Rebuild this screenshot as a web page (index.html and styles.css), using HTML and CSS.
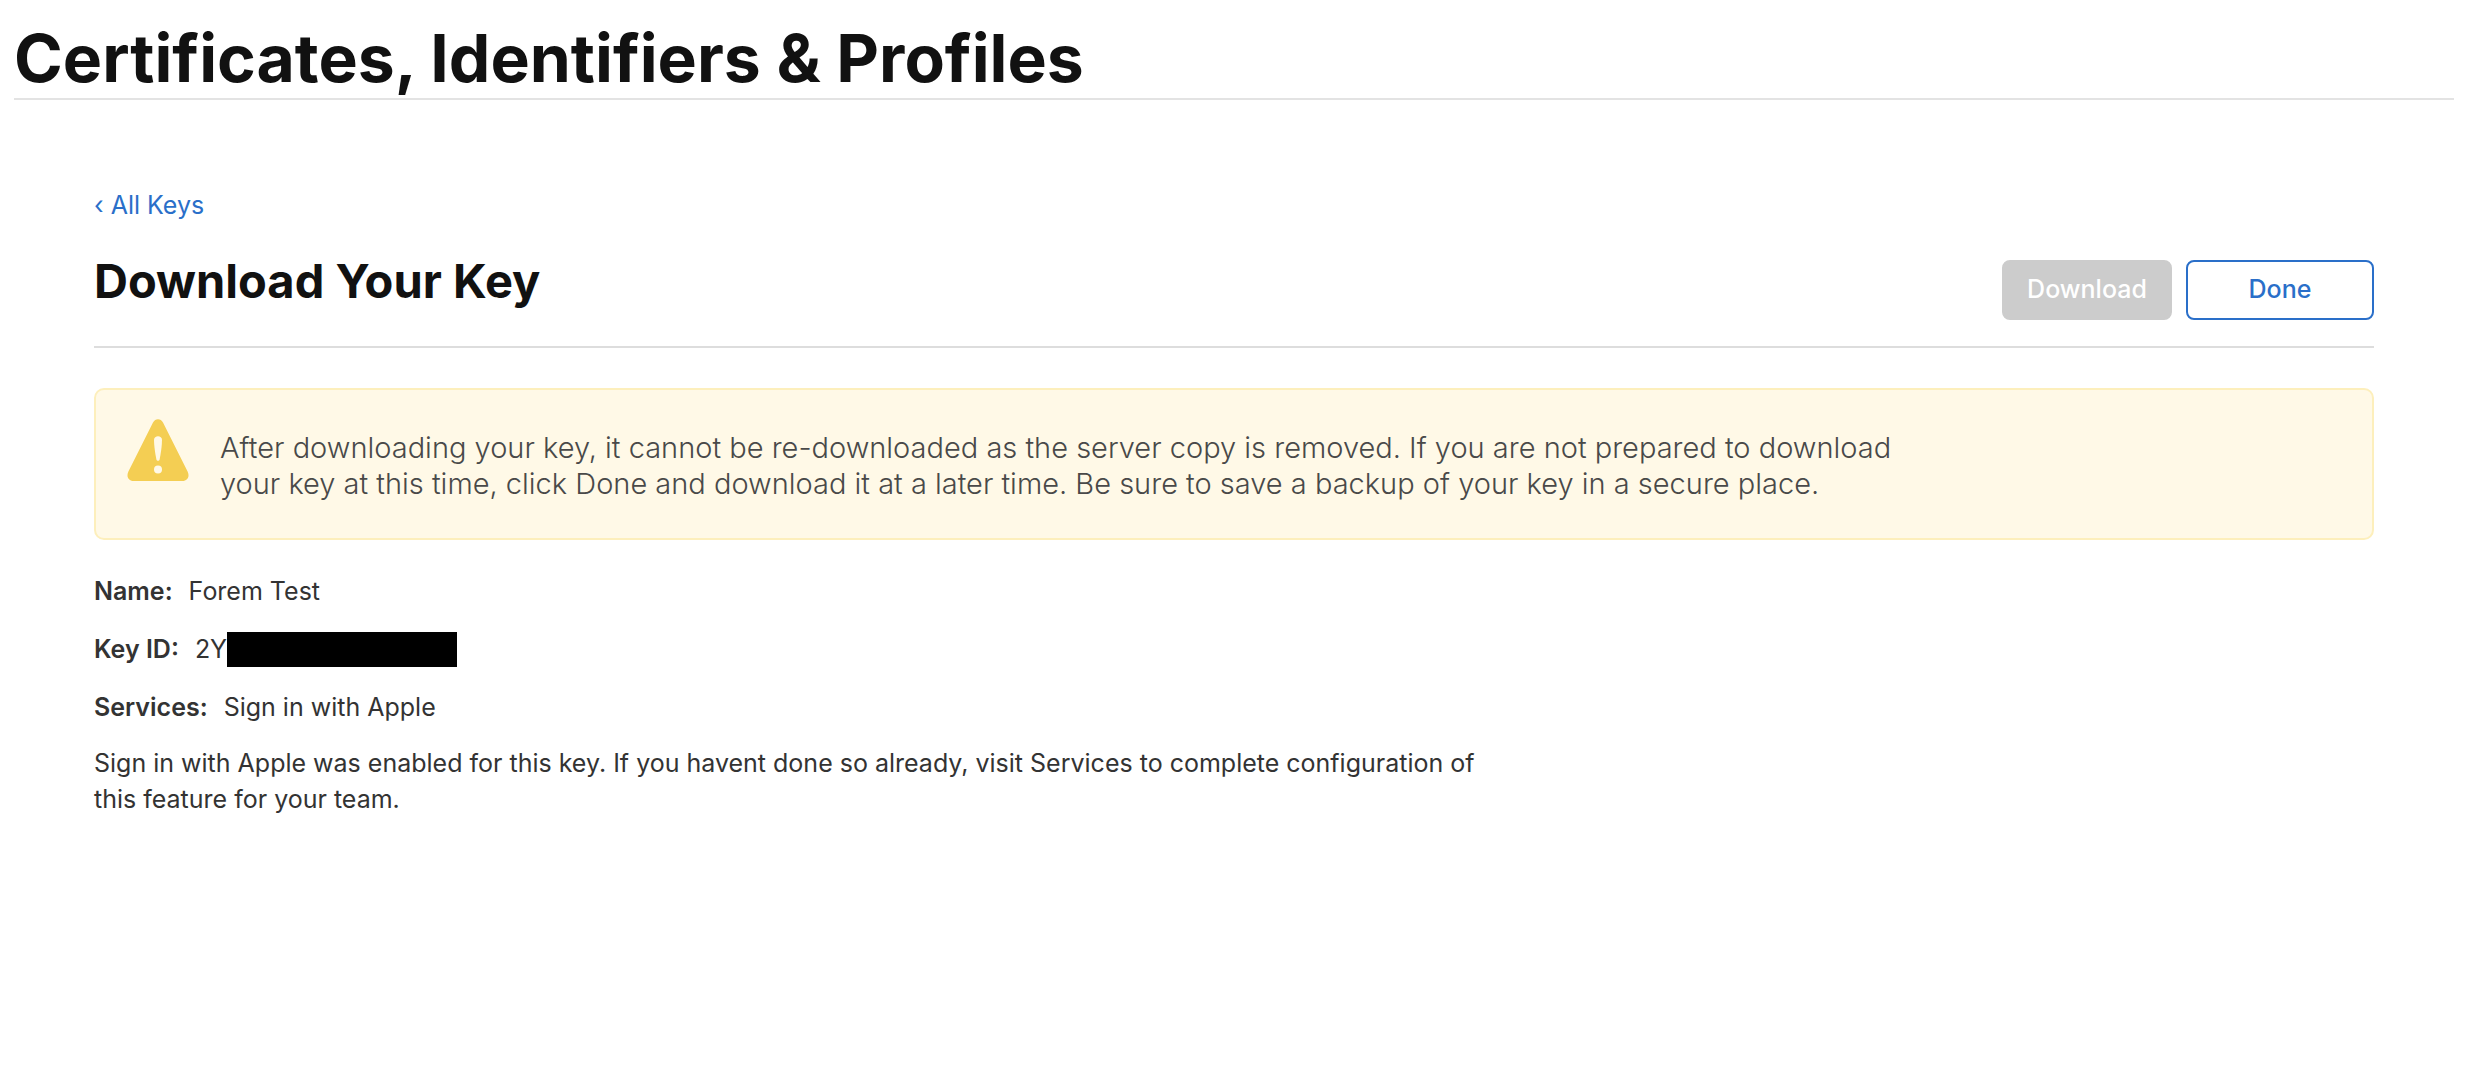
FILE: index.html
```html
<!DOCTYPE html>
<html lang="en">
<head>
<meta charset="utf-8">
<meta name="viewport" content="width=device-width, initial-scale=1">
<title>Certificates, Identifiers &amp; Profiles</title>
<link rel="stylesheet" href="styles.css">
</head>
<body>
<header class="page-header">
  <h1 class="page-title">Certificates, Identifiers &amp; Profiles</h1>
</header>
<main class="content">
  <a class="back-link" href="#keys">‹ All Keys</a>
  <div class="toolbar">
    <h2 class="section-title">Download Your Key</h2>
    <div class="actions">
      <button class="button button-primary" type="button" disabled>Download</button>
      <button class="button button-secondary" type="button">Done</button>
    </div>
  </div>
  <section class="alert">
    <svg class="alert-icon" viewBox="0 0 62 63" aria-hidden="true">
      <path fill="#f4ce53" d="M26 4.500C28 0 34 0 36 4.500L60.600 53.500C63 58.500 60.500 63 55.500 63H6.500C1.500 63-1 58.500 1.400 53.500Z"/>
      <path fill="#fff9e7" d="M27 22C27 17 35 17 35 22C35 28 33.700 36 32.600 41.500C32.200 43.300 29.800 43.300 29.400 41.500C28.300 36 27 28 27 22Z"/>
      <circle fill="#fff9e7" cx="31" cy="51.500" r="4"/>
    </svg>
    <p class="alert-text">After downloading your key, it cannot be re-downloaded as the server copy is removed. If you are not prepared to download your key at this time, click Done and download it at a later time. Be sure to save a backup of your key in a secure place.</p>
  </section>
  <dl class="details">
    <div class="detail"><dt>Name:</dt><dd>Forem Test</dd></div>
    <div class="detail"><dt>Key ID:</dt><dd>2Y<span class="redacted"></span></dd></div>
    <div class="detail"><dt>Services:</dt><dd>Sign in with Apple</dd></div>
  </dl>
  <p class="note">Sign in with Apple was enabled for this key. If you havent done so already, visit Services to complete configuration of this feature for your team.</p>
</main>
</body>
</html>
```
FILE: styles.css
```css
* {
  box-sizing: border-box;
}

body {
  margin: 0;
  background: #fff;
  color: #333;
  font-family: Inter, "Liberation Sans", sans-serif;
  font-size: 25px;
  line-height: 36px;
}

h1, h2, p, dl, dd {
  margin: 0;
}

.page-header {
  margin: 0 20px 0 14px;
  padding: 20px 0 2px;
  border-bottom: 2px solid #e3e3e3;
}

.page-title {
  color: #111;
  font-size: 66px;
  font-weight: 700;
  line-height: 76px;
}

.content {
  padding: 87px 100px 0 94px;
}

.back-link {
  display: inline-block;
  color: #2a6fc9;
  text-decoration: none;
}

.toolbar {
  display: flex;
  justify-content: space-between;
  align-items: flex-start;
  padding: 28px 0 26px;
  border-bottom: 2px solid #ddd;
}

.section-title {
  color: #111;
  font-size: 47px;
  font-weight: 700;
  line-height: 60px;
}

.actions {
  display: flex;
  gap: 14px;
  padding-top: 9px;
}

.button {
  height: 60px;
  padding: 0 22px 2px;
  border: 2px solid #2a6fc9;
  border-radius: 8px;
  background: #fff;
  color: #2a6fc9;
  font: inherit;
  font-weight: 500;
}

.button-primary {
  min-width: 170px;
  border-color: #ccc;
  background: #ccc;
  color: #fff;
}

.button-secondary {
  min-width: 188px;
}

.alert {
  display: flex;
  gap: 31px;
  margin-top: 40px;
  padding: 28px 31px 36px;
  border: 2px solid #fdefbc;
  border-radius: 10px;
  background: #fff9e7;
}

.alert-icon {
  flex: none;
  width: 62px;
  height: 63px;
}

.alert-text {
  max-width: 1680px;
  padding-top: 12px;
  color: #494949;
  font-size: 29px;
  font-weight: 300;
}

.details {
  display: grid;
  gap: 22px;
  margin-top: 33px;
}

.detail {
  display: flex;
  gap: 16px;
}

.detail dt {
  font-weight: 600;
}

.detail dd {
  display: flex;
  align-items: flex-end;
}

.redacted {
  width: 230px;
  height: 35px;
  background: #000;
}

.note {
  max-width: 1420px;
  margin-top: 20px;
}
```
